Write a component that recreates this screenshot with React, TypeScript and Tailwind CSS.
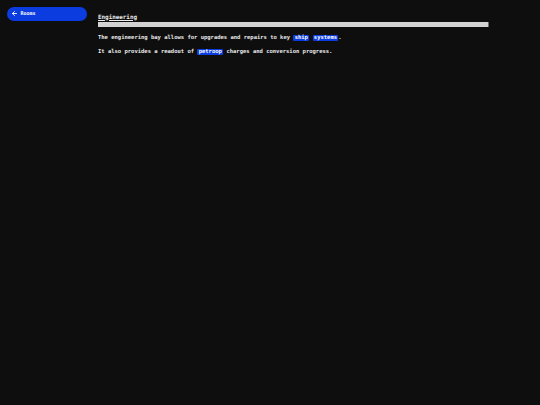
import { ArrowLeft } from "lucide-react";

export default function App() {
  return (
    <div
      className="min-h-screen w-full bg-[#0e0e0e] flex text-[#ececec]"
      style={{ fontFamily: '"DejaVu Sans Mono", monospace' }}
    >
      <aside className="w-[98px] shrink-0 pl-[7px] pt-[6.5px]">
        <button className="w-[80px] h-[14px] rounded-full bg-[#0a3ce0] flex items-center pl-[3.5px] gap-[3px] text-white text-[5px] font-bold leading-none">
          <ArrowLeft size={7} strokeWidth={3} />
          <span>Rooms</span>
        </button>
      </aside>
      <main className="w-[391px] shrink-0 pt-[13.5px]">
        <h1 className="text-[5.9px] leading-[7px] font-bold underline">Engineering</h1>
        <div className="mt-[1.5px] h-[5px] bg-[#d2d2d2] border-r border-[#6a6a6a]" />
        <p className="mt-[6.2px] text-[5.5px] leading-[8px] font-bold">
          The engineering bay allows for upgrades and repairs to key{" "}
          <span className="inline-block bg-[#0a3ce0] text-white px-[1.3px] leading-[5px] pb-[1px] rounded-[1px]">ship</span>{" "}
          <span className="inline-block bg-[#0a3ce0] text-white px-[1.3px] leading-[5px] pb-[1px] rounded-[1px]">systems</span>.
        </p>
        <p className="mt-[5.8px] text-[5.5px] leading-[8px] font-bold">
          It also provides a readout of{" "}
          <span className="inline-block bg-[#0a3ce0] text-white px-[1.3px] leading-[5px] pb-[1px] rounded-[1px]">petroop</span>{" "}
          charges and conversion progress.
        </p>
      </main>
    </div>
  );
}
